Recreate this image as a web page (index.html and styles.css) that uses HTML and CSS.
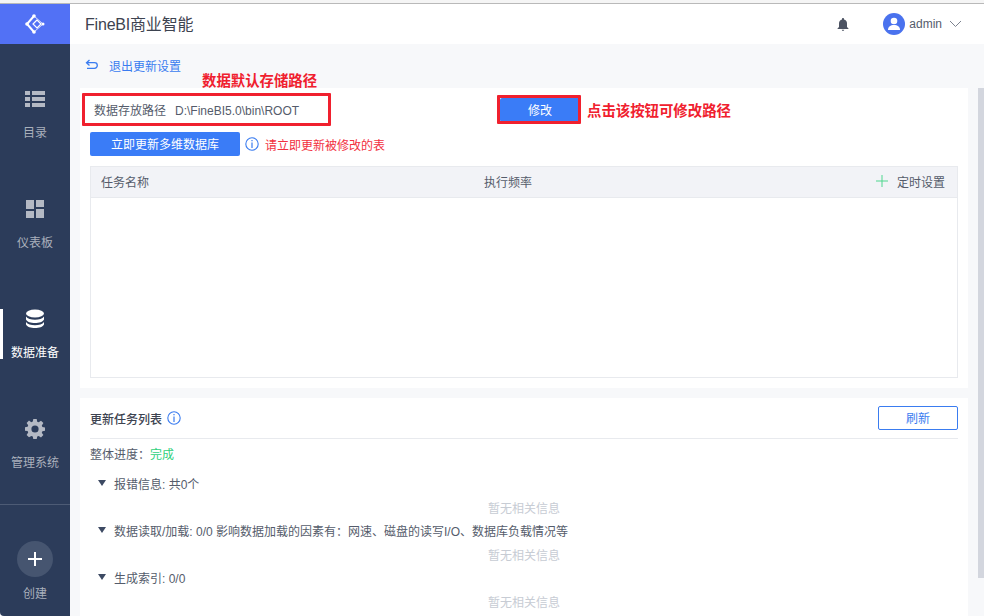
FILE: index.html
```html
<!DOCTYPE html>
<html lang="zh-CN">
<head>
<meta charset="utf-8">
<title>FineBI商业智能</title>
<link rel="stylesheet" href="styles.css">
</head>
<body>
<div class="app">
  <aside class="sidebar">
    <div class="logo">
      <svg width="20" height="20" viewBox="0 0 20 20" fill="none" stroke="#fff">
        <path d="M9 2 2 10 9 18" stroke-width="2"/>
        <path d="M9 2 18 10 9 18" stroke-width=".8"/>
        <path d="M12 6 8 10 12 14 16 10Z" stroke-width="1.200"/>
        <g fill="#fff" stroke="none"><circle cx="9" cy="2" r="1.800"/><circle cx="2" cy="10" r="1.800"/><circle cx="18" cy="10" r="1.500"/><circle cx="9" cy="18" r="1.800"/></g>
      </svg>
    </div>
    <nav class="nav">
      <a class="nav-item">
        <svg width="20" height="20" viewBox="0 0 20 20" fill="#b4b9c4"><path d="M0 2h5v4H0zM7 2h13v4H7zM0 8h5v4H0zM7 8h13v4H7zM0 14h5v4H0zM7 14h13v4H7z"/></svg>
        <span>目录</span>
      </a>
      <a class="nav-item">
        <svg width="20" height="20" viewBox="0 0 20 20" fill="#b4b9c4"><path d="M1 1h8v9H1zM11 1h8v7h-8zM1 12h8v7H1zM11 10h8v9h-8z"/></svg>
        <span>仪表板</span>
      </a>
      <a class="nav-item active">
        <svg width="20" height="20" viewBox="0 0 20 20" fill="#fff"><ellipse cx="10" cy="4.500" rx="9" ry="4"/><path d="M1 7.500c1.500 2.200 5 3.200 9 3.200s7.500-1 9-3.200v3c-1 2.400-5 3.500-9 3.500s-8-1.100-9-3.500z"/><path d="M1 13c1.500 2.200 5 3.200 9 3.200s7.500-1 9-3.200v2.500c-1 2.400-5 3.500-9 3.500s-8-1.100-9-3.500z"/></svg>
        <span>数据准备</span>
      </a>
      <a class="nav-item">
        <svg width="20" height="20" viewBox="0 0 20 20" fill="#b4b9c4"><path fill-rule="evenodd" d="M8.300 0h3.400l.5 2.700 1.500.6 2.300-1.600 2.400 2.400-1.600 2.300.6 1.500 2.700.5v3.400l-2.700.5-.6 1.500 1.600 2.300-2.400 2.400-2.300-1.600-1.500.6-.5 2.700H8.300l-.5-2.700-1.500-.6L4 18.300l-2.400-2.400 1.600-2.300-.6-1.500L0 11.700V8.300l2.600-.5.6-1.500L1.600 4 4 1.600l2.300 1.600 1.500-.6zM10 6.400a3.600 3.600 0 1 0 0 7.200 3.600 3.600 0 0 0 0-7.200z"/></svg>
        <span>管理系统</span>
      </a>
    </nav>
    <div class="create">
      <div class="create-btn">
        <svg width="14" height="14" viewBox="0 0 14 14" fill="#fff"><path d="M6 0h2v6h6v2H8v6H6V8H0V6h6z"/></svg>
      </div>
      <span>创建</span>
    </div>
  </aside>
  <div class="content">
    <header class="topbar">
      <h1 class="brand">FineBI商业智能</h1>
      <svg class="bell" width="12" height="13" viewBox="0 0 12 13" fill="#4c5362"><path d="M6 0c.6 0 1 .4 1 1v.5c2 .5 3 2 3 4V9l1.500 1.500V11H.5v-.5L2 9V5.500c0-2 1-3.500 3-4V1c0-.6.4-1 1-1zM4.700 11.800h2.600A1.400 1.400 0 0 1 6 13a1.400 1.400 0 0 1-1.300-1.200z"/></svg>
      <div class="user">
        <span class="avatar">
          <svg width="14" height="14" viewBox="0 0 14 14" fill="#fff"><circle cx="7" cy="4" r="3.300"/><path d="M1 13c0-3.500 2.500-5 6-5s6 1.500 6 5z"/></svg>
        </span>
        <span class="user-name">admin</span>
        <svg width="13" height="8" viewBox="0 0 13 8" fill="none" stroke="#7d8390" stroke-width="1"><path d="M1 1l5.500 5.500L12 1"/></svg>
      </div>
    </header>
    <main class="main">
      <div class="back-row">
        <svg width="14" height="12" viewBox="0 0 14 12" fill="none" stroke="#3a7cf0" stroke-width="1.300"><path d="M4.500 1 1.500 3.700 4.500 6.500M1.500 3.700H9.500a2.800 2.800 0 0 1 0 5.600H2"/></svg>
        <a class="back-link">退出更新设置</a>
      </div>
      <section class="panel panel-top">
        <div class="path-row">
          <span class="path-text">数据存放路径<span class="path-value">D:\FineBI5.0\bin\ROOT</span></span>
          <button class="btn btn-primary btn-edit">修改</button>
        </div>
        <div class="action-row">
          <button class="btn btn-primary btn-update">立即更新多维数据库</button>
          <svg class="info" width="14" height="14" viewBox="0 0 14 14"><circle cx="7" cy="7" r="6.200" fill="none" stroke="#3a7cf0" stroke-width="1.100"/><path d="M6.400 3h1.200v1.300H6.400zM6.400 5.600h1.200V11H6.400z" fill="#3a7cf0"/></svg>
          <span class="warn">请立即更新被修改的表</span>
        </div>
        <div class="task-table">
          <div class="task-head">
            <span class="col-name">任务名称</span>
            <span class="col-rate">执行频率</span>
            <span class="col-timer">
              <svg width="12" height="12" viewBox="0 0 12 12" fill="#4fd88f"><path d="M5.500 0h1v5.500H12v1H6.500V12h-1V6.500H0v-1h5.500z"/></svg>
              定时设置
            </span>
          </div>
        </div>
      </section>
      <section class="panel panel-bottom">
        <div class="list-head">
          <span class="list-title">更新任务列表</span>
          <svg width="14" height="14" viewBox="0 0 14 14"><circle cx="7" cy="7" r="6.200" fill="none" stroke="#3a7cf0" stroke-width="1.100"/><path d="M6.400 3h1.200v1.300H6.400zM6.400 5.600h1.200V11H6.400z" fill="#3a7cf0"/></svg>
          <button class="btn btn-outline">刷新</button>
        </div>
        <div class="progress">整体进度：<span class="done">完成</span></div>
        <div class="group">
          <div class="group-title"><i class="caret"></i>报错信息: 共0个</div>
          <div class="empty">暂无相关信息</div>
        </div>
        <div class="group">
          <div class="group-title"><i class="caret"></i>数据读取/加载: 0/0 影响数据加载的因素有：网速、磁盘的读写I/O、数据库负载情况等</div>
          <div class="empty">暂无相关信息</div>
        </div>
        <div class="group">
          <div class="group-title"><i class="caret"></i>生成索引: 0/0</div>
          <div class="empty">暂无相关信息</div>
        </div>
      </section>
      <div class="scrollbar"></div>
    </main>
  </div>
  <div class="note note-default">数据默认存储路径</div>
  <div class="note note-edit">点击该按钮可修改路径</div>
  <div class="mark mark-path"></div>
  <div class="mark mark-edit"></div>
</div>
</body>
</html>
```
FILE: styles.css
```css
* { box-sizing: border-box; }
html, body { margin: 0; height: 100%; overflow: hidden; }
body {
  font-family: "Liberation Sans", "Noto Sans CJK SC", sans-serif;
  font-size: 12px;
  color: #555c6b;
  background: #f7f8fa;
}
.app {
  position: relative;
  display: flex;
  width: 984px;
  height: 616px;
  padding-top: 4px;
  background: linear-gradient(#f5f5f5 0 3px, #b9b9b9 3px 4px, #fff 4px);
}
.sidebar {
  flex: 0 0 70px;
  display: flex;
  flex-direction: column;
  background: #2c3c5a;
  color: #aab0bc;
  border-bottom-left-radius: 4px;
}
.logo {
  flex: 0 0 40px;
  display: flex;
  align-items: center;
  justify-content: center;
  background: #5271f5;
}
.nav { flex: 1; display: flex; flex-direction: column; padding-top: 15px; }
.nav-item {
  position: relative;
  flex: 0 0 110px;
  display: flex;
  flex-direction: column;
  align-items: center;
  gap: 15px;
  padding-top: 30px;
  line-height: 18px;
}
.nav-item.active { color: #fff; }
.nav-item.active::before {
  content: "";
  position: absolute;
  left: 0;
  top: 30px;
  width: 3px;
  height: 50px;
  background: #fff;
}
.create {
  flex: 0 0 112px;
  display: flex;
  flex-direction: column;
  align-items: center;
  gap: 8px;
  padding-top: 36px;
  border-top: 1px solid #4d5b75;
  line-height: 18px;
}
.create-btn {
  width: 36px;
  height: 36px;
  border-radius: 50%;
  background: #465570;
  display: flex;
  align-items: center;
  justify-content: center;
}
.content { flex: 1; display: flex; flex-direction: column; min-width: 0; }
.topbar {
  flex: 0 0 40px;
  display: flex;
  align-items: center;
  padding: 0 22px 0 15px;
  background: #fff;
}
.brand {
  margin: 0 0 2px;
  flex: 1;
  font-size: 16px;
  font-weight: 400;
  letter-spacing: -0.2px;
  color: #3d4350;
}
.bell { margin-right: 34px; }
.user { display: flex; align-items: center; gap: 4px; }
.avatar {
  width: 22px;
  height: 22px;
  border-radius: 50%;
  background: #4a72ee;
  display: flex;
  align-items: center;
  justify-content: center;
}
.user-name { margin-right: 3px; }
.main {
  position: relative;
  flex: 1;
  display: flex;
  flex-direction: column;
  padding: 0 16px 0 10px;
  background: #f7f8fa;
  min-height: 0;
}
.back-row {
  flex: 0 0 44px;
  display: flex;
  align-items: center;
  gap: 10px;
  padding: 0 0 2px 5px;
}
.back-link { color: #3a7cf0; }
.panel { background: #fff; padding: 0 10px; }
.panel-top { flex: 0 0 300px; }
.path-row {
  height: 44px;
  display: flex;
  align-items: center;
}
.path-text { flex: 0 0 410px; padding: 0 0 2px 4px; }
.path-value { margin-left: 9px; }
.btn {
  font-family: inherit;
  font-size: 12px;
  border-radius: 2px;
  padding: 0 0 2px;
  cursor: pointer;
}
.btn-primary { background: #3a7cf7; color: #fff; border: 0; }
.btn-edit { width: 80px; height: 24px; }
.action-row { height: 24px; display: flex; align-items: center; }
.btn-update { width: 150px; height: 24px; }
.info { margin-left: 5px; margin-right: 6px; }
.warn { color: #f2303e; }
.task-table {
  margin-top: 10px;
  height: 212px;
  border: 1px solid #e8eaee;
}
.task-head {
  display: flex;
  align-items: center;
  height: 31px;
  padding: 0 12px 2px 10px;
  background: #f2f3f7;
  border-bottom: 1px solid #e8eaee;
}
.col-name { flex: 0 0 383px; }
.col-rate { flex: 1; }
.col-timer { display: flex; align-items: center; gap: 9px; }
.panel-bottom { margin-top: 10px; flex: 1; min-height: 0; overflow: hidden; }
.list-head {
  position: relative;
  height: 41px;
  display: flex;
  align-items: center;
  gap: 5px;
  border-bottom: 1px solid #e8eaee;
}
.list-title { font-weight: 500; color: #3d4350; }
.btn-outline {
  margin-left: auto;
  width: 80px;
  height: 24px;
  background: #fff;
  color: #3a7cf0;
  border: 1px solid #3a7cf0;
}
.progress { height: 28px; display: flex; align-items: center; white-space: pre; }
.done { color: #2fd07c; }
.group-title {
  display: flex;
  align-items: center;
  height: 32px;
  padding-left: 8px;
  white-space: nowrap;
}
.caret {
  width: 0;
  height: 0;
  margin-right: 8px;
  border-left: 4px solid transparent;
  border-right: 4px solid transparent;
  border-top: 6px solid #3d4a63;
}
.empty {
  height: 15px;
  line-height: 21px;
  text-align: center;
  color: #c7ccd4;
}
.scrollbar {
  position: absolute;
  right: 0;
  top: 44px;
  width: 6px;
  height: 490px;
  background: #d3d6de;
}
.note {
  position: absolute;
  font-size: 14.4px;
  font-weight: 700;
  color: #f0202e;
  line-height: 18px;
  white-space: nowrap;
}
.note-default { left: 202px; top: 72px; }
.note-edit { left: 587px; top: 102px; }
.mark { position: absolute; border: 3px solid #f0202e; border-radius: 1px; }
.mark-path { left: 82px; top: 93px; width: 249px; height: 33px; }
.mark-edit { left: 497px; top: 95px; width: 84px; height: 29px; }
```
